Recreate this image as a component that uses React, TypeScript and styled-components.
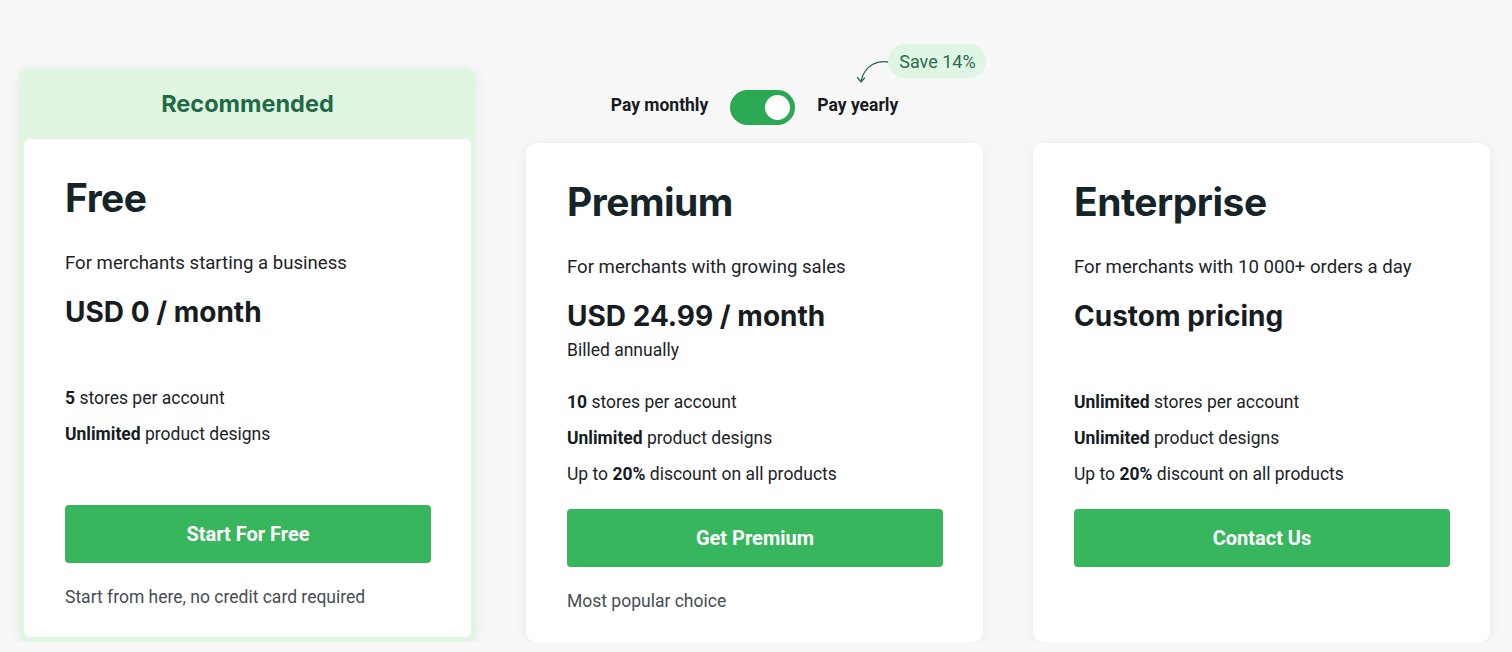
import styled, { createGlobalStyle } from "styled-components";

const GlobalStyle = createGlobalStyle`
  html, body {
    margin: 0;
    padding: 0;
    background: #f7f7f7;
    font-family: Roboto, "Liberation Sans", sans-serif;
  }
`;

const Page = styled.main`
  display: flex;
  align-items: flex-end;
  column-gap: 50px;
  padding: 44px 0 0 19px;
`;

const Column = styled.div`
  display: flex;
  flex-direction: column;
  align-items: center;
  width: 457px;
`;

const RecommendedFrame = styled.section`
  width: 457px;
  box-sizing: border-box;
  padding: 0 5px 5px;
  background: #e1f5e3;
  border-radius: 10px;
  box-shadow: 0 2px 14px rgba(0, 0, 0, 0.06);
`;

const RecommendedLabel = styled.div`
  height: 71px;
  display: flex;
  align-items: center;
  justify-content: center;
  font-family: Inter, "Noto Sans", sans-serif;
  font-weight: 700;
  font-size: 23.5px;
  color: #1f6b45;
`;

const Card = styled.article<{ $flat?: boolean }>`
  width: 100%;
  height: ${(p) => (p.$flat ? "498px" : "499px")};
  box-sizing: border-box;
  padding: 35px 40px 0 41px;
  background: #ffffff;
  border-radius: ${(p) => (p.$flat ? "6px" : "10px")};
  box-shadow: ${(p) => (p.$flat ? "none" : "0 2px 14px rgba(0, 0, 0, 0.06)")};
  display: flex;
  flex-direction: column;
  color: #1d2326;
`;

const Title = styled.h2`
  margin: 0;
  font-family: Inter, "Noto Sans", sans-serif;
  font-weight: 700;
  font-size: 39px;
  line-height: 48px;
  letter-spacing: -0.5px;
  color: #152429;
`;

const Subtitle = styled.p`
  margin: 29px 0 0;
  font-size: 18.6px;
  line-height: 24px;
  color: #1d2326;
`;

const Price = styled.div`
  margin: 19px 0 0;
  font-family: Inter, "Noto Sans", sans-serif;
  font-weight: 700;
  font-size: 28px;
  line-height: 36px;
  color: #161c1f;
`;

const Billed = styled.div`
  margin-top: 4px;
  min-height: 24px;
  font-size: 17.5px;
  line-height: 24px;
  color: #1d2326;
`;

const Features = styled.ul`
  list-style: none;
  margin: 28px 0 0;
  padding: 0;
  display: flex;
  flex-direction: column;
  row-gap: 12px;
  min-height: 96px;
`;

const Feature = styled.li`
  font-size: 17.5px;
  line-height: 24px;
  color: #1d2326;

  b {
    font-weight: 700;
    color: #161c1f;
  }
`;

const ActionButton = styled.button`
  margin-top: 23px;
  height: 58px;
  width: 100%;
  border: none;
  border-radius: 4px;
  background: #38b65d;
  color: #ffffff;
  font-family: Roboto, "Liberation Sans", sans-serif;
  font-weight: 700;
  font-size: 20px;
  cursor: pointer;
`;

const Footnote = styled.p`
  margin: 22px 0 0;
  font-size: 17.5px;
  line-height: 24px;
  color: #474d52;
`;

const ToggleArea = styled.div`
  padding-top: 46px;
  margin-bottom: 18px;
`;

const ToggleRow = styled.div`
  position: relative;
  display: flex;
  align-items: center;
  column-gap: 22px;
  height: 35px;
`;

const ToggleLabel = styled.span`
  font-weight: 700;
  font-size: 17.5px;
  color: #161c1f;
  margin-bottom: 5px;
`;

const Switch = styled.button`
  position: relative;
  width: 65px;
  height: 35px;
  border: none;
  border-radius: 18px;
  background: #2aa952;
  padding: 0;
  cursor: pointer;

  &::after {
    content: "";
    position: absolute;
    top: 5px;
    right: 5px;
    width: 25px;
    height: 25px;
    border-radius: 50%;
    background: #ffffff;
  }
`;

const SavePill = styled.span`
  position: absolute;
  top: -46px;
  left: calc(100% - 10px);
  height: 34px;
  padding: 0 10px 0 11px;
  display: flex;
  align-items: center;
  border-radius: 17px;
  background: #e0f6e4;
  color: #2e6b4f;
  font-size: 18px;
  white-space: nowrap;
`;

const SaveArrow = styled.svg`
  position: absolute;
  top: -35px;
  left: calc(100% - 43px);
`;

type Plan = {
  name: string;
  subtitle: string;
  price: string;
  billed?: string;
  features: React.ReactNode[];
  action: string;
  footnote?: string;
};

const plans: Plan[] = [
  {
    name: "Free",
    subtitle: "For merchants starting a business",
    price: "USD 0 / month",
    features: [
      <>
        <b>5</b> stores per account
      </>,
      <>
        <b>Unlimited</b> product designs
      </>,
    ],
    action: "Start For Free",
    footnote: "Start from here, no credit card required",
  },
  {
    name: "Premium",
    subtitle: "For merchants with growing sales",
    price: "USD 24.99 / month",
    billed: "Billed annually",
    features: [
      <>
        <b>10</b> stores per account
      </>,
      <>
        <b>Unlimited</b> product designs
      </>,
      <>
        Up to <b>20%</b> discount on all products
      </>,
    ],
    action: "Get Premium",
    footnote: "Most popular choice",
  },
  {
    name: "Enterprise",
    subtitle: "For merchants with 10 000+ orders a day",
    price: "Custom pricing",
    features: [
      <>
        <b>Unlimited</b> stores per account
      </>,
      <>
        <b>Unlimited</b> product designs
      </>,
      <>
        Up to <b>20%</b> discount on all products
      </>,
    ],
    action: "Contact Us",
  },
];

const PlanCard = ({ plan, flat }: { plan: Plan; flat?: boolean }) => (
  <Card $flat={flat}>
    <Title>{plan.name}</Title>
    <Subtitle>{plan.subtitle}</Subtitle>
    <Price>{plan.price}</Price>
    <Billed>{plan.billed}</Billed>
    <Features>
      {plan.features.map((f, i) => (
        <Feature key={i}>{f}</Feature>
      ))}
    </Features>
    <ActionButton>{plan.action}</ActionButton>
    {plan.footnote && <Footnote>{plan.footnote}</Footnote>}
  </Card>
);

const BillingToggle = () => (
  <ToggleArea>
    <ToggleRow>
      <ToggleLabel>Pay monthly</ToggleLabel>
      <Switch aria-label="Toggle billing period" />
      <ToggleLabel>Pay yearly</ToggleLabel>
      <SaveArrow width="36" height="34" viewBox="0 0 36 34" fill="none">
        <path
          d="M34 7 C 22 5, 10 10, 6 26"
          stroke="#2e6b4f"
          strokeWidth="1.3"
          strokeLinecap="round"
        />
        <path
          d="M2.5 22.5 L6 27 L9.5 23"
          stroke="#2e6b4f"
          strokeWidth="1.3"
          strokeLinecap="round"
          strokeLinejoin="round"
        />
      </SaveArrow>
      <SavePill>Save 14%</SavePill>
    </ToggleRow>
  </ToggleArea>
);

export default function App() {
  return (
    <>
      <GlobalStyle />
      <Page>
        <RecommendedFrame>
          <RecommendedLabel>Recommended</RecommendedLabel>
          <PlanCard plan={plans[0]} flat />
        </RecommendedFrame>
        <Column>
          <BillingToggle />
          <PlanCard plan={plans[1]} />
        </Column>
        <Column>
          <PlanCard plan={plans[2]} />
        </Column>
      </Page>
    </>
  );
}
